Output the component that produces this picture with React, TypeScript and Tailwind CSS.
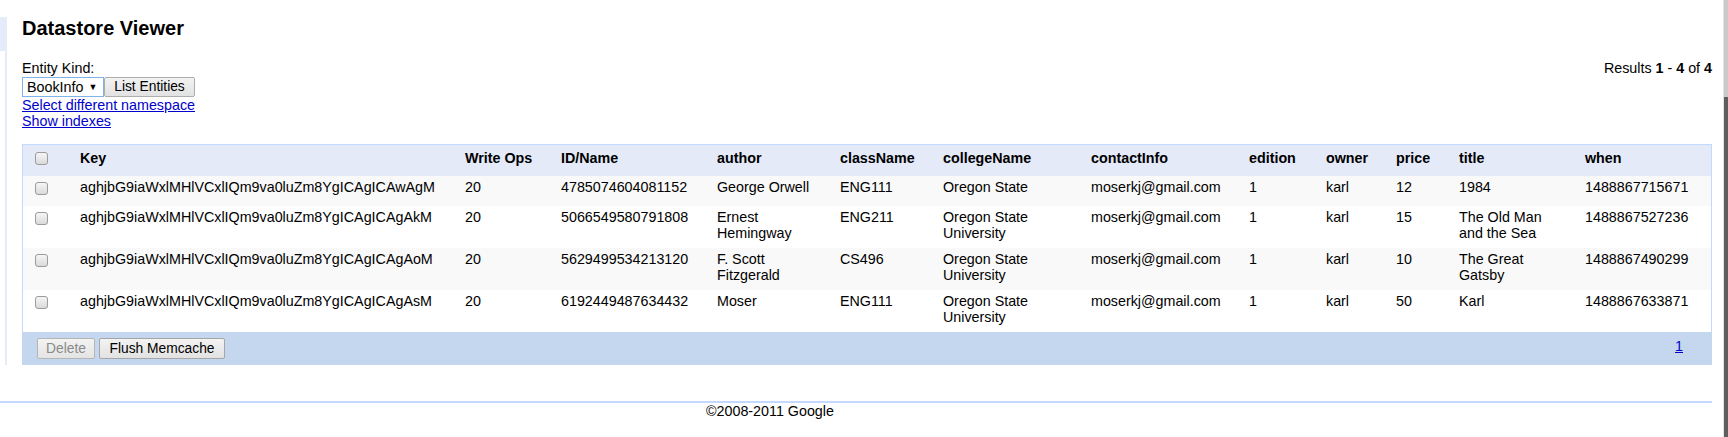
import React from 'react'

// Datastore Viewer (App Engine dev console look)

type Row = {
  key: string
  writeOps: string
  id: string
  author: string
  className: string
  collegeName: string
  contactInfo: string
  edition: string
  owner: string
  price: string
  title: string
  when: string
}

const rows: Row[] = [
  {
    key: 'aghjbG9iaWxlMHlVCxlIQm9va0luZm8YgICAgICAwAgM',
    writeOps: '20',
    id: '4785074604081152',
    author: 'George Orwell',
    className: 'ENG111',
    collegeName: 'Oregon State',
    contactInfo: 'moserkj@gmail.com',
    edition: '1',
    owner: 'karl',
    price: '12',
    title: '1984',
    when: '1488867715671'
  },
  {
    key: 'aghjbG9iaWxlMHlVCxlIQm9va0luZm8YgICAgICAgAkM',
    writeOps: '20',
    id: '5066549580791808',
    author: 'Ernest Hemingway',
    className: 'ENG211',
    collegeName: 'Oregon State University',
    contactInfo: 'moserkj@gmail.com',
    edition: '1',
    owner: 'karl',
    price: '15',
    title: 'The Old Man and the Sea',
    when: '1488867527236'
  },
  {
    key: 'aghjbG9iaWxlMHlVCxlIQm9va0luZm8YgICAgICAgAoM',
    writeOps: '20',
    id: '5629499534213120',
    author: 'F. Scott Fitzgerald',
    className: 'CS496',
    collegeName: 'Oregon State University',
    contactInfo: 'moserkj@gmail.com',
    edition: '1',
    owner: 'karl',
    price: '10',
    title: 'The Great Gatsby',
    when: '1488867490299'
  },
  {
    key: 'aghjbG9iaWxlMHlVCxlIQm9va0luZm8YgICAgICAgAsM',
    writeOps: '20',
    id: '6192449487634432',
    author: 'Moser',
    className: 'ENG111',
    collegeName: 'Oregon State University',
    contactInfo: 'moserkj@gmail.com',
    edition: '1',
    owner: 'karl',
    price: '50',
    title: 'Karl',
    when: '1488867633871'
  }
]

const columns: { label: string; field: keyof Row; width: string }[] = [
  { label: 'Key', field: 'key', width: 'w-[385px]' },
  { label: 'Write Ops', field: 'writeOps', width: 'w-[96px]' },
  { label: 'ID/Name', field: 'id', width: 'w-[156px]' },
  { label: 'author', field: 'author', width: 'w-[123px]' },
  { label: 'className', field: 'className', width: 'w-[103px]' },
  { label: 'collegeName', field: 'collegeName', width: 'w-[148px]' },
  { label: 'contactInfo', field: 'contactInfo', width: 'w-[158px]' },
  { label: 'edition', field: 'edition', width: 'w-[77px]' },
  { label: 'owner', field: 'owner', width: 'w-[70px]' },
  { label: 'price', field: 'price', width: 'w-[63px]' },
  { label: 'title', field: 'title', width: 'w-[126px]' },
  { label: 'when', field: 'when', width: 'w-[126px]' }
]

const Checkbox = () => (
  <span className="block h-[13px] w-[13px] rounded-[3px] border border-[#9c9c9c] bg-linear-to-b from-[#f6f6f6] to-[#dadada]" />
)

export default function App() {
  return (
    <div className="flex h-[437px] w-[1728px] overflow-hidden bg-white font-['Liberation_Sans',Arial,sans-serif] text-[14.3px] leading-4 text-black">
      <div className="w-[1723px]">
        <div className="flex">
          {/* left nav edge */}
          <div className="mt-[17px] flex h-[348px] w-[7px] flex-col">
            <div className="h-[34px] bg-[#e5ecf9]" />
            <div className="flex-1 border-r-2 border-[#e5ecf9]" />
          </div>

          <div className="ml-[15px] w-[1690px] pt-[16px]">
            <h1 className="text-[20px] font-bold leading-6">Datastore Viewer</h1>

            <div className="mt-[20px] flex items-start justify-between">
              <div>
                <div>Entity Kind:</div>
                <div className="mt-px flex">
                  <div className="flex h-[20px] w-[82px] items-center border border-[#7eb4ea] bg-white pl-[4px] text-[14.3px]">
                    <span>BookInfo</span>
                    <span className="ml-[5px] text-[9px]">▼</span>
                  </div>
                  <button className="h-[20px] w-[91px] rounded-[2px] border border-[#adadad] bg-linear-to-b from-[#f3f3f3] to-[#e2e2e2] text-[13.8px] leading-4 text-black">
                    List Entities
                  </button>
                </div>
                <a href="#" className="block text-[#0000cc] underline">
                  Select different namespace
                </a>
                <a href="#" className="block text-[#0000cc] underline">
                  Show indexes
                </a>
              </div>
              <div>
                Results <b>1</b> - <b>4</b> of <b>4</b>
              </div>
            </div>

            <div className="mt-[15px]">
              <div className="border-x border-t border-[#c3d9ff]">
                <table className="w-full table-fixed border-collapse">
                  <colgroup>
                    <col className="w-[57px]" />
                    {columns.map(c => (
                      <col key={c.field} className={c.width} />
                    ))}
                  </colgroup>
                  <thead>
                    <tr className="bg-[#e4eaf8]">
                      <th className="pb-[11px] pl-[12px] pt-[7px] align-top">
                        <Checkbox />
                      </th>
                      {columns.map(c => (
                        <th key={c.field} className="pr-[20px] pt-[5px] text-left align-top font-bold">
                          {c.label}
                        </th>
                      ))}
                    </tr>
                  </thead>
                  <tbody>
                    {rows.map((r, i) => (
                      <tr key={r.key} className={i % 2 === 0 ? 'bg-[#f9f9f9]' : 'bg-white'}>
                        <td className="pb-[11px] pl-[12px] pt-[6px] align-top">
                          <Checkbox />
                        </td>
                        {columns.map(c => (
                          <td key={c.field} className="pb-[7px] pr-[20px] pt-[3px] align-top">
                            {r[c.field]}
                          </td>
                        ))}
                      </tr>
                    ))}
                  </tbody>
                </table>
              </div>

              <div className="flex h-[33px] items-start justify-between bg-[#c5d7ef] pl-[15px] pr-[29px] pt-[6px]">
                <div className="flex gap-[4px]">
                  <button
                    disabled
                    className="h-[21px] w-[58px] rounded-[2px] border border-[#b5b5b5] bg-linear-to-b from-[#f3f3f3] to-[#e4e4e4] text-[13.8px] leading-4 text-[#8a8a8a]"
                  >
                    Delete
                  </button>
                  <button className="h-[21px] w-[126px] rounded-[2px] border border-[#a6a6a6] bg-linear-to-b from-[#f3f3f3] to-[#e2e2e2] text-[13.8px] leading-4 text-black">
                    Flush Memcache
                  </button>
                </div>
                <a href="#" className="text-[#0000cc] underline">
                  1
                </a>
              </div>
            </div>
          </div>
        </div>

        <div className="mt-[36px] h-[2px] w-[1712px] bg-[#c3d9ff]" />
        <div className="pl-[706px]">©2008-2011 Google</div>
      </div>

      {/* window edge / scrollbar */}
      <div className="flex w-[5px] flex-col border-l border-[#e3e3e3]">
        <div className="h-[97px] bg-[#cacaca]" />
        <div className="flex-1 bg-[#5e5e5e]" />
      </div>
    </div>
  )
}
